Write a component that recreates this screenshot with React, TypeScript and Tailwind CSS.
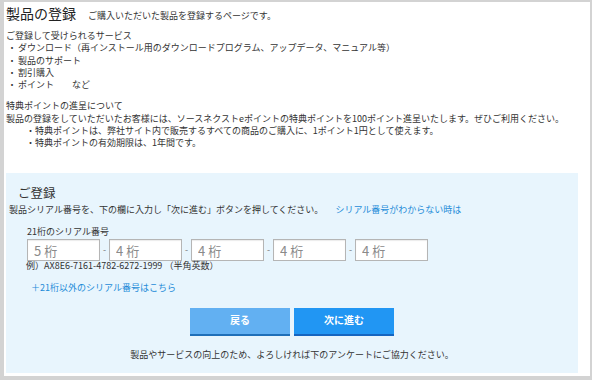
const font = { fontFamily: '"Noto Sans CJK JP", "Noto Sans", sans-serif' }

const services = [
  'ダウンロード（再インストール用のダウンロードプログラム、アップデータ、マニュアル等）',
  '製品のサポート',
  '割引購入',
  'ポイント　　など',
]

const fields = ['5 桁', '4 桁', '4 桁', '4 桁', '4 桁']

export default function App() {
  return (
    <div className="w-[592px] h-[380px] bg-[#d3d3d3] pt-[2px] pl-[4px] overflow-hidden" style={font}>
      <div className="w-[586px] h-[374px] bg-white pl-[2px] text-[#333] text-[9px] leading-[12.3px]">
        <div className="flex items-baseline h-[22px] pt-[1px]">
          <h1 className="text-[14px] leading-[20px] font-normal text-[#222]">製品の登録</h1>
          <span className="ml-[12px] text-[9px]">ご購入いただいた製品を登録するページです。</span>
        </div>

        <div className="mt-[6px]">
          <p>ご登録して受けられるサービス</p>
          <ul>
            {services.map((s) => (
              <li key={s} className="flex">
                <span className="w-[12px] text-center">・</span>
                <span>{s}</span>
              </li>
            ))}
          </ul>
        </div>

        <div className="mt-[9px]">
          <p>特典ポイントの進呈について</p>
          <p>製品の登録をしていただいたお客様には、ソースネクストeポイントの特典ポイントを100ポイント進呈いたします。ぜひご利用ください。</p>
          <p className="pl-[20px]">・特典ポイントは、弊社サイト内で販売するすべての商品のご購入に、1ポイント1円として使えます。</p>
          <p className="pl-[20px]">・特典ポイントの有効期限は、1年間です。</p>
        </div>

        <section className="mt-[23px] w-[572px] h-[200px] bg-[#e8f5fd] pt-[12px] pl-[3px]">
          <h2 className="pl-[9px] text-[12.5px] leading-[16px] font-normal text-[#333]">ご登録</h2>
          <div className="mt-[3px] flex">
            <span>製品シリアル番号を、下の欄に入力し「次に進む」ボタンを押してください。</span>
            <a className="ml-[12px] text-[#1d8bd8]">シリアル番号がわからない時は</a>
          </div>
          <p className="mt-[10px] pl-[18px]">21桁のシリアル番号</p>
          <div className="mt-[1px] pl-[18px] flex items-center">
            {fields.map((f, i) => (
              <div key={i} className="flex items-center">
                {i > 0 && <span className="w-[9px] text-center text-[#777] text-[9px]">-</span>}
                <input
                  placeholder={f}
                  className="w-[73px] h-[22px] border border-[#b5b5b5] bg-white px-[6px] text-[13px] placeholder:text-[#8a8a8a] shadow-[inset_0_1px_1px_rgba(0,0,0,0.08)] outline-none"
                  style={font}
                />
              </div>
            ))}
          </div>
          <p className="pl-[17px] leading-[10px]">例）AX8E6-7161-4782-6272-1999 （半角英数）</p>
          <a className="block mt-[11px] pl-[22px] text-[#1d8bd8]">＋21桁以外のシリアル番号はこちら</a>
          <div className="mt-[13px] flex justify-center gap-[4px] pr-[3px]">
            <button className="w-[100px] h-[28px] bg-[#62b0f2] border-b-2 border-[#1f6fb8] text-white font-bold text-[10px]" style={font}>戻る</button>
            <button className="w-[100px] h-[28px] bg-[#2196f3] border-b-2 border-[#1565c0] text-white font-bold text-[10px]" style={font}>次に進む</button>
          </div>
          <p className="mt-[13px] text-center pr-[3px]">製品やサービスの向上のため、よろしければ下のアンケートにご協力ください。</p>
        </section>
      </div>
    </div>
  )
}
